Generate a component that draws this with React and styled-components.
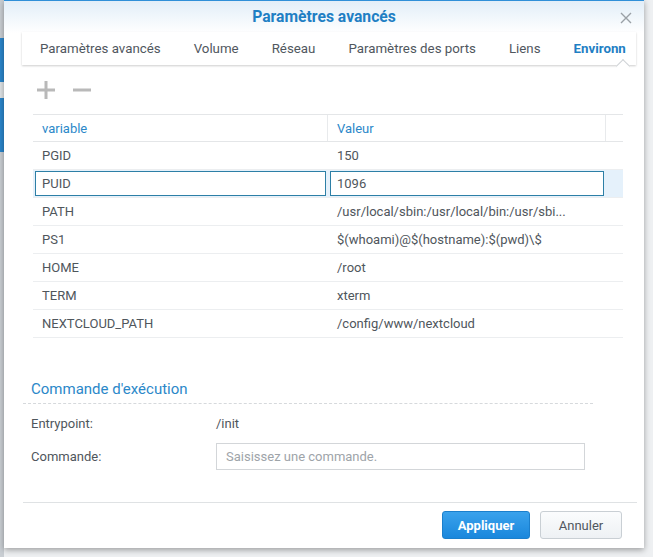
import React from "react";
import styled, { createGlobalStyle } from "styled-components";

const GlobalStyle = createGlobalStyle`
  html, body {
    margin: 0;
    padding: 0;
    background: #eef0f2;
    font-family: Roboto, "Liberation Sans", sans-serif;
    font-size: 13px;
    color: #4f565c;
  }
`;

const tabs = [
  { label: "Paramètres avancés" },
  { label: "Volume" },
  { label: "Réseau" },
  { label: "Paramètres des ports" },
  { label: "Liens" },
  { label: "Environn", active: true },
];

const envRows = [
  ["PGID", "150"],
  ["PUID", "1096", true],
  ["PATH", "/usr/local/sbin:/usr/local/bin:/usr/sbi..."],
  ["PS1", "$(whoami)@$(hostname):$(pwd)\\$"],
  ["HOME", "/root"],
  ["TERM", "xterm"],
  ["NEXTCLOUD_PATH", "/config/www/nextcloud"],
];

const App = () => {
  return (
    <Screen>
      <GlobalStyle />
      <BackStrip />
      <Dialog>
        <Header>
          <Title>Paramètres avancés</Title>
          <Close>
            <svg width="12" height="12" viewBox="0 0 12 12">
              <path d="M1 1L11 11M11 1L1 11" stroke="#9aa0a6" strokeWidth="1.4" />
            </svg>
          </Close>
        </Header>
        <TabBar>
          {tabs.map((t, i) => (
            <React.Fragment key={t.label}>
              {i > 0 && <TabSep />}
              <Tab $active={t.active}>{t.label}</Tab>
            </React.Fragment>
          ))}
          <Caret />
        </TabBar>

        <Body>
          <Toolbar>
            <ToolIcon viewBox="0 0 20 20">
              <path d="M10 1V19M1 10H19" stroke="#b9b9b9" strokeWidth="3" />
            </ToolIcon>
            <ToolIcon viewBox="0 0 20 20">
              <path d="M1 10H19" stroke="#b9b9b9" strokeWidth="3" />
            </ToolIcon>
          </Toolbar>

          <Table>
            <HeadRow>
              <HeadCell $w={295}>variable</HeadCell>
              <HeadCell $w={278}>Valeur</HeadCell>
              <HeadCell $w={17} />
            </HeadRow>
            {envRows.map(([name, value, selected]) => (
              <Row key={name} $selected={selected}>
                {selected ? (
                  <>
                    <EditBox $w={291}>{name}</EditBox>
                    <EditBox $w={274}>{value}</EditBox>
                  </>
                ) : (
                  <>
                    <Cell $w={295}>{name}</Cell>
                    <Cell $w={278}>{value}</Cell>
                  </>
                )}
              </Row>
            ))}
          </Table>

          <SectionTitle>Commande d'exécution</SectionTitle>
          <Form>
            <FormRow>
              <Label>Entrypoint:</Label>
              <Value>/init</Value>
            </FormRow>
            <FormRow>
              <Label>Commande:</Label>
              <Input placeholder="Saisissez une commande." />
            </FormRow>
          </Form>
        </Body>

        <Footer>
          <PrimaryButton>Appliquer</PrimaryButton>
          <Button>Annuler</Button>
        </Footer>
      </Dialog>
    </Screen>
  );
};

const Screen = styled.div`
  display: flex;
  width: 653px;
  height: 557px;
  overflow: hidden;
`;

const BackStrip = styled.div`
  width: 4px;
  flex: none;
  background: linear-gradient(
    #c9ced3 0 38px,
    #2b86cc 38px 82px,
    #dfe3e6 82px 98px,
    #2b86cc 98px 152px,
    #c9ced3 152px
  );
`;

const Dialog = styled.div`
  width: 640px;
  height: 548px;
  background: #fff;
  box-shadow: 0 2px 6px rgba(0, 0, 0, 0.35);
  display: flex;
  flex-direction: column;
  position: relative;
`;

const Header = styled.div`
  height: 32px;
  border-top: 1px solid #2f8fd8;
  background: linear-gradient(#e2eef8, #ffffff);
  display: flex;
  align-items: center;
  justify-content: center;
  position: relative;
`;

const Title = styled.div`
  color: #1f7fc4;
  font-weight: bold;
  font-size: 15.7px;
  margin-top: -1px;
`;

const Close = styled.div`
  position: absolute;
  right: 12px;
  top: 11px;
  line-height: 0;
`;

const TabBar = styled.div`
  margin: -1px 8px 0 18px;
  height: 33px;
  background: #fff;
  box-shadow: 0 1px 2px rgba(0, 0, 0, 0.2);
  display: flex;
  align-items: center;
  position: relative;
`;

const Tab = styled.div`
  padding: 0 16px 0 17px;
  white-space: nowrap;
  color: ${(p) => (p.$active ? "#1f7fc4" : "#50575e")};
  font-weight: ${(p) => (p.$active ? "bold" : "normal")};
  font-size: 13.3px;
  &:first-child {
    padding-left: 18px;
  }
`;

const TabSep = styled.div`
  width: 1px;
  height: 22px;
  background: #e3e5e7;
`;

const Caret = styled.div`
  position: absolute;
  right: 8px;
  bottom: -1px;
  width: 9px;
  height: 9px;
  background: #fff;
  border-left: 1px solid #cfd3d6;
  border-top: 1px solid #cfd3d6;
  transform: translateY(50%) rotate(45deg);
`;

const Body = styled.div`
  flex: 1;
  padding: 0 0 0 29px;
`;

const Toolbar = styled.div`
  height: 49px;
  display: flex;
  align-items: center;
  gap: 16px;
  padding-left: 3px;
`;

const ToolIcon = styled.svg`
  width: 20px;
  height: 20px;
`;

const Table = styled.div`
  width: 590px;
  border-top: 1px solid #e4e6e8;
`;

const HeadRow = styled.div`
  display: flex;
  height: 26px;
  border-bottom: 1px solid #e4e6e8;
`;

const HeadCell = styled.div`
  width: ${(p) => p.$w}px;
  padding-left: 9px;
  box-sizing: border-box;
  border-right: 1px solid #e8eaec;
  color: #2b88c9;
  display: flex;
  align-items: center;
  &:last-child {
    border-right: none;
  }
`;

const Row = styled.div`
  display: flex;
  align-items: center;
  height: 27px;
  border-bottom: 1px solid #eceef0;
  background: ${(p) => (p.$selected ? "#e5f1fb" : "transparent")};
  gap: ${(p) => (p.$selected ? "4px" : "0")};
  padding-left: ${(p) => (p.$selected ? "2px" : "0")};
`;

const Cell = styled.div`
  width: ${(p) => p.$w}px;
  padding-left: 9px;
  box-sizing: border-box;
  white-space: nowrap;
  overflow: hidden;
`;

const EditBox = styled.div`
  width: ${(p) => p.$w}px;
  height: 25px;
  box-sizing: border-box;
  background: #fff;
  border: 1px solid #2d7fa6;
  padding-left: 6px;
  display: flex;
  align-items: center;
`;

const SectionTitle = styled.div`
  margin-top: 42px;
  width: 562px;
  padding-bottom: 5px;
  color: #2b88c9;
  font-size: 15px;
  border-bottom: 1px dashed #d6d9dc;
  margin-left: -10px;
  padding-left: 8px;
`;

const Form = styled.div`
  padding-top: 3px;
  margin-left: -2px;
`;

const FormRow = styled.div`
  display: flex;
  align-items: center;
  height: 33px;
`;

const Label = styled.div`
  width: 185px;
`;

const Value = styled.div``;

const Input = styled.input`
  width: 369px;
  height: 27px;
  box-sizing: border-box;
  border: 1px solid #d3d6d9;
  padding: 0 9px;
  font-family: inherit;
  font-size: 13px;
  color: #4f565c;
  outline: none;
  &::placeholder {
    color: #9ea4a9;
  }
`;

const Footer = styled.div`
  margin: 0 7px 0 19px;
  border-top: 1px solid #dfe2e4;
  height: 44px;
  display: flex;
  align-items: center;
  justify-content: flex-end;
  gap: 10px;
  padding-right: 15px;
  margin-bottom: 1px;
`;

const Button = styled.button`
  height: 28px;
  min-width: 82px;
  padding: 0 14px;
  border-radius: 3px;
  border: 1px solid #c9cfd4;
  background: linear-gradient(#fbfcfd, #eef1f4);
  font-family: inherit;
  font-size: 13px;
  color: #50575e;
`;

const PrimaryButton = styled(Button)`
  min-width: 88px;
  border-color: #1b7fcc;
  background: linear-gradient(#3aa2ec, #1a87dc);
  color: #fff;
  font-weight: bold;
`;

export default App;
